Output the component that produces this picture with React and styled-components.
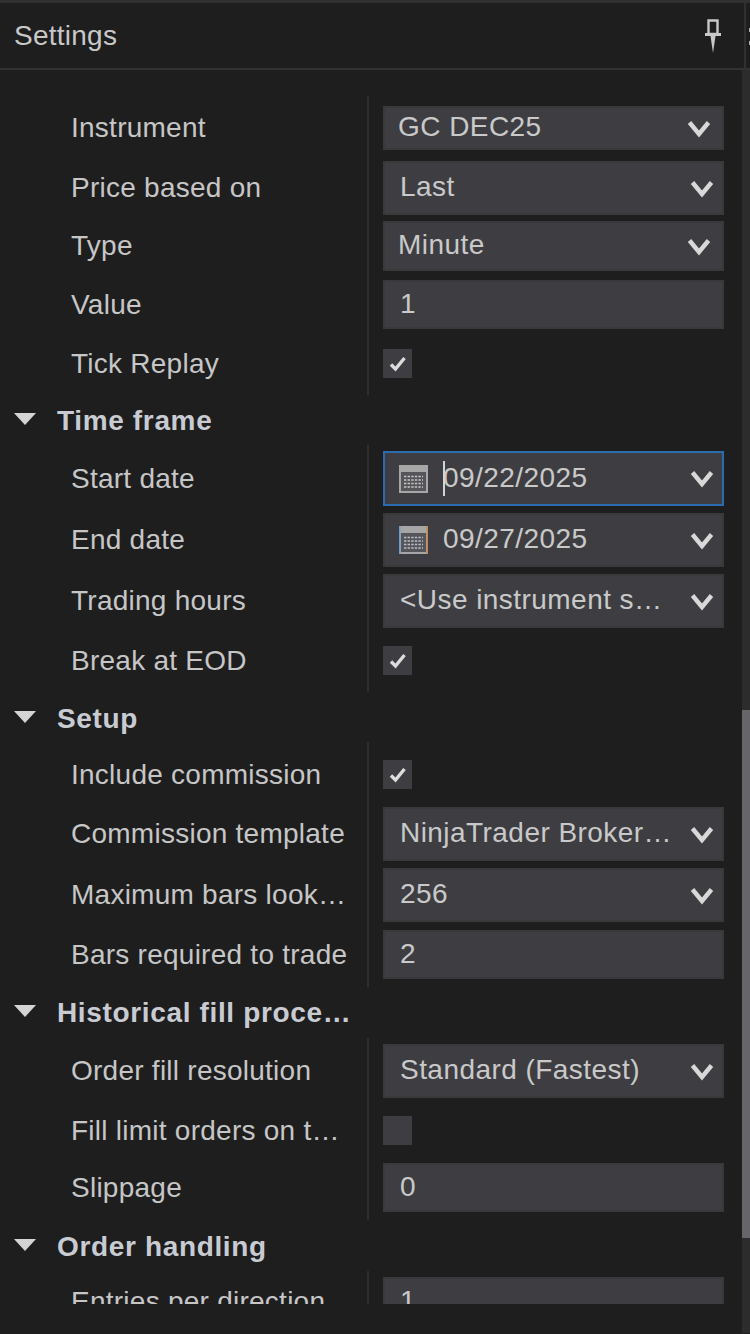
import React from 'react';
import styled, { createGlobalStyle } from 'styled-components';

const GlobalStyle = createGlobalStyle`
  html, body {
    margin: 0;
    padding: 0;
    background: #1e1e1f;
  }
  * {
    box-sizing: border-box;
  }
`;

const Chevron = () => (
  <svg width="24" height="18" viewBox="0 0 24 18" fill="none">
    <path d="M2.5 2.5L12 14L21.5 2.5" stroke="#d8d8d8" strokeWidth="4.4" />
  </svg>
);

const Check = () => (
  <svg width="20" height="18" viewBox="0 0 20 18" fill="none">
    <path d="M3 9.5L7.5 14L16.5 3" stroke="#dcdcdc" strokeWidth="3.4" />
  </svg>
);

const CalendarIcon = ({ tinted }) => (
  <svg width="29" height="28" viewBox="0 0 29 28">
    <rect x="0" y="0" width="29" height="28" fill="#a6a6a6" />
    <rect x="0" y="0" width="1.5" height="28" fill={tinted ? '#6f9ccc' : '#a6a6a6'} />
    <rect x="27.5" y="0" width="1.5" height="28" fill={tinted ? '#c08a52' : '#a6a6a6'} />
    <rect x="2" y="7" width="25" height="19" fill="#55555a" />
    <path
      d="M5 11.5h19M5 15h19M5 18.5h19M5 22h19"
      stroke={tinted ? '#b9bcc9' : '#c4c4c4'}
      strokeWidth="1.6"
      strokeDasharray="2.4 1.2"
    />
  </svg>
);

const PinIcon = () => (
  <svg width="16" height="34" viewBox="0 0 16 34" fill="none">
    <path d="M3.5 1.5H12.5V15H3.5Z" stroke="#c8c8c8" strokeWidth="2.4" />
    <path d="M0 15.5H16" stroke="#c8c8c8" strokeWidth="3" />
    <path d="M5.5 17H10.5L8 34Z" fill="#c8c8c8" />
  </svg>
);

const SectionArrow = () => (
  <svg width="22" height="12" viewBox="0 0 22 12">
    <path d="M0 0H22L11 12Z" fill="#d4d4d4" />
  </svg>
);

const Field = ({ label, top, bottom, children }) => (
  <Row>
    <Label $top={top} $bottom={bottom}>{label}</Label>
    <ValueCell $top={top} $bottom={bottom}>{children}</ValueCell>
  </Row>
);

const Select = ({ h, pad = 15, wide, children }) => (
  <Control $h={h} $pad={pad}>
    <ControlText>{children}</ControlText>
    <ChevronSlot $wide={wide}>
      <Chevron />
    </ChevronSlot>
  </Control>
);

const DateSelect = ({ h, focused, tinted, children }) => (
  <Control $h={h} $pad={14} $focused={focused}>
    <CalendarIcon tinted={tinted} />
    <DateText>
      {focused && <Caret />}
      {children}
    </DateText>
    <ChevronSlot>
      <Chevron />
    </ChevronSlot>
  </Control>
);

const NumberBox = ({ h, children }) => (
  <Control $h={h} $pad={15}>
    <ControlText>{children}</ControlText>
  </Control>
);

const App = () => (
  <>
    <GlobalStyle />
    <Page>
      <Header>
        <Title>Settings</Title>
        <PinSlot>
          <PinIcon />
        </PinSlot>
        <HeaderEdge>
          <EdgeDot />
          <EdgeDot />
        </HeaderEdge>
      </Header>
      <Body>
        <Content>
          <Group $mt={26}>
            <Field label="Instrument" top={10} bottom={5}>
              <Select h={44} pad={13} wide>GC DEC25</Select>
            </Field>
            <Field label="Price based on" top={6} bottom={2}>
              <Select h={54}>Last</Select>
            </Field>
            <Field label="Type" top={4} bottom={4}>
              <Select h={50} pad={13} wide>Minute</Select>
            </Field>
            <Field label="Value" top={5} bottom={10}>
              <NumberBox h={49}>1</NumberBox>
            </Field>
            <Field label="Tick Replay" top={10} bottom={17}>
              <CheckBox $checked><Check /></CheckBox>
            </Field>
          </Group>

          <SectionHeader $nudge={2}>
            <SectionArrow />
            Time frame
          </SectionHeader>
          <Group>
            <Field label="Start date" top={6} bottom={3}>
              <DateSelect h={55} focused>09/22/2025</DateSelect>
            </Field>
            <Field label="End date" top={4} bottom={3}>
              <DateSelect h={54} tinted>09/27/2025</DateSelect>
            </Field>
            <Field label="Trading hours" top={4} bottom={9}>
              <Select h={54}>&lt;Use instrument s…</Select>
            </Field>
            <Field label="Break at EOD" top={9} bottom={17}>
              <CheckBox $checked><Check /></CheckBox>
            </Field>
          </Group>

          <SectionHeader $nudge={4}>
            <SectionArrow />
            Setup
          </SectionHeader>
          <Group>
            <Field label="Include commission" top={18} bottom={9}>
              <CheckBox $checked><Check /></CheckBox>
            </Field>
            <Field label="Commission template" top={9} bottom={3}>
              <Select h={54}>NinjaTrader Broker…</Select>
            </Field>
            <Field label="Maximum bars look…" top={4} bottom={4}>
              <Select h={54}>256</Select>
            </Field>
            <Field label="Bars required to trade" top={4} bottom={8}>
              <NumberBox h={49}>2</NumberBox>
            </Field>
          </Group>

          <SectionHeader $h={51} $nudge={1}>
            <SectionArrow />
            Historical fill proce…
          </SectionHeader>
          <Group>
            <Field label="Order fill resolution" top={6} bottom={9}>
              <Select h={54}>Standard (Fastest)</Select>
            </Field>
            <Field label="Fill limit orders on t…" top={9} bottom={9}>
              <CheckBox />
            </Field>
            <Field label="Slippage" top={9} bottom={8}>
              <NumberBox h={49}>0</NumberBox>
            </Field>
          </Group>

          <SectionHeader $h={51} $nudge={3}>
            <SectionArrow />
            Order handling
          </SectionHeader>
          <Group>
            <Field label="Entries per direction" top={6} bottom={10}>
              <NumberBox h={49}>1</NumberBox>
            </Field>
          </Group>
        </Content>
        <ScrollTrack>
          <ScrollThumb />
        </ScrollTrack>
      </Body>
    </Page>
  </>
);

const Page = styled.div`
  width: 750px;
  height: 1334px;
  background: #1e1e1f;
  border-top: 3px solid #303032;
  font-family: 'Liberation Sans', Arial, sans-serif;
  color: #c9c9c9;
  font-size: 28px;
  line-height: 28px;
  letter-spacing: 0.25px;
  overflow: hidden;
`;

const Header = styled.div`
  height: 67px;
  display: flex;
  align-items: center;
  padding-left: 14px;
  border-bottom: 2px solid #323234;
`;

const Title = styled.div`
  flex: 1;
  color: #c8c8c8;
`;

const PinSlot = styled.div`
  display: flex;
  margin-right: 23px;
  margin-top: 1px;
`;

const HeaderEdge = styled.div`
  width: 6px;
  align-self: stretch;
  margin-bottom: -1px;
  border-left: 2px solid #303032;
  display: flex;
  flex-direction: column;
  justify-content: center;
  gap: 9px;
`;

const EdgeDot = styled.div`
  width: 3px;
  height: 4px;
  margin-left: 3px;
  background: #b0b0b0;
`;

const Body = styled.div`
  display: flex;
  align-items: flex-start;
`;

const Content = styled.div`
  width: 742px;
  height: 1234px;
  overflow: hidden;
`;

const ScrollTrack = styled.div`
  width: 8px;
  height: 1263px;
  background: #2c2c2d;
  padding-top: 640px;
`;

const ScrollThumb = styled.div`
  height: 528px;
  background: #66666a;
`;

const Group = styled.div`
  margin-top: ${(p) => p.$mt || 0}px;
`;

const Row = styled.div`
  display: flex;
`;

const Label = styled.div`
  width: 367px;
  flex: none;
  padding: ${(p) => p.$top}px 0 ${(p) => p.$bottom}px 71px;
  display: flex;
  align-items: center;
  white-space: nowrap;
  color: #c6c6c6;
`;

const ValueCell = styled.div`
  width: 357px;
  flex: none;
  border-left: 2px solid #2e2e30;
  padding: ${(p) => p.$top}px 0 ${(p) => p.$bottom}px 14px;
`;

const Control = styled.div`
  height: ${(p) => p.$h}px;
  display: flex;
  align-items: center;
  padding-left: ${(p) => p.$pad}px;
  background: #3e3e42;
  border: 2px solid ${(p) => (p.$focused ? '#2b6cb0' : '#39393c')};
  color: #c9c9c9;
  letter-spacing: 0.45px;
`;

const ControlText = styled.span`
  flex: 1;
  white-space: nowrap;
  margin-top: -2px;
`;

const DateText = styled.span`
  flex: 1;
  position: relative;
  margin-left: 15px;
  margin-top: -2px;
  white-space: nowrap;
`;

const Caret = styled.span`
  position: absolute;
  left: 0;
  top: -3px;
  width: 2px;
  height: 35px;
  background: #d4d4d4;
`;

const ChevronSlot = styled.span`
  display: flex;
  margin-right: ${(p) => (p.$wide ? 11 : 8)}px;
  margin-top: 1px;
`;

const CheckBox = styled.div`
  width: 29px;
  height: 29px;
  background: #3e3e42;
  display: flex;
  align-items: center;
  justify-content: center;
`;

const SectionHeader = styled.div`
  height: ${(p) => p.$h || 50}px;
  display: flex;
  align-items: center;
  gap: 21px;
  padding: ${(p) => p.$nudge || 0}px 0 0 14px;
  font-weight: bold;
  letter-spacing: 0.65px;
  color: #c8ccd2;
  white-space: nowrap;
  svg {
    flex: none;
    margin-top: -4px;
  }
`;

export default App;
